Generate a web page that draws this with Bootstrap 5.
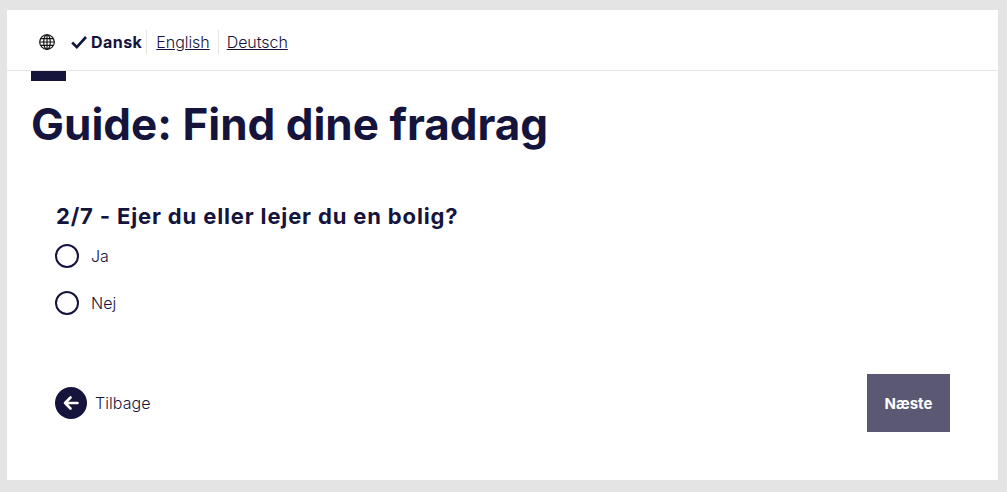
<!DOCTYPE html>
<html lang="da">
<head>
<meta charset="utf-8">
<title>Guide: Find dine fradrag</title>
<link href="https://cdn.jsdelivr.net/npm/bootstrap@5.3.0/dist/css/bootstrap.min.css" rel="stylesheet">
<style>
html,body{height:100%}
body{background:#e4e4e4;padding:10px 9px 12px 7px;font-family:Inter,"Liberation Sans",sans-serif;color:#14143c;overflow:hidden}
.sheet{background:#fff;height:470px;display:flex;flex-direction:column}
.langbar{height:61px;border-bottom:1px solid #e4e4e4;padding:20px 0 0 32px;align-items:flex-start}
.globe{width:16px;height:16px;margin:4px 16px 0 0;flex:none}
.lang{font-size:16px;line-height:24px;padding:0 8px 0 8px;height:24px;color:#14143c;font-weight:300;letter-spacing:-.05px}
.lang+.lang{border-left:1px solid #e4e4e4}
.lang.cur{font-weight:700;padding-left:0;padding-right:4px;display:flex;align-items:center;gap:4px;font-size:16px;letter-spacing:.45px}
.lang.cur+.lang{padding-left:9px}
.lang a{color:#14143c;text-decoration:underline}
.tick{width:16px;height:14px}
.accent{width:35px;height:10px;background:#14143c;margin-left:24px}
.ttl{font:700 44px/56px Inter,sans-serif;letter-spacing:0;color:#14143c;margin:15px 0 0 24px}
.guide{padding:49px 48px 0 48px}
.q{font:700 22px/30px Inter,sans-serif;margin:0 0 13px 1px;color:#14143c;letter-spacing:.85px}
.opt{display:flex;align-items:center;gap:12px;height:24px;margin-bottom:23px;font:300 16px/24px Inter,sans-serif}
.ring{width:24px;height:24px;border:2px solid #14143c;border-radius:50%;flex:none}
.foot{margin-top:59px;align-items:center}
.back{display:flex;align-items:center;gap:8px;font:300 16px/24px Inter,sans-serif;letter-spacing:.05px;color:#14143c;text-decoration:none}
.backdot{width:32px;height:32px;border-radius:50%;background:#14143c;display:flex;align-items:center;justify-content:center}
.next{width:83px;height:58px;background:#5b5873;color:#fff;border:0;border-radius:0;font:700 15px Inter,sans-serif;padding:0}
.next:disabled{background:#5b5873;color:#fff;opacity:1}
</style>
</head>
<body>
<div class="sheet">
  <nav class="langbar d-flex" aria-label="Sprog">
    <svg class="globe" viewBox="0 0 16 16" fill="none" stroke="#111" stroke-width="1.15"><circle cx="8" cy="8" r="7.3"/><ellipse cx="8" cy="8" rx="3.3" ry="7.3"/><path d="M.8 8h14.4M2 4.6h12M2 11.4h12M8 .8v14.4"/></svg>
    <div class="lang cur"><svg class="tick" viewBox="0 0 16 14" fill="none" stroke="#14143c" stroke-width="2.6"><path d="M1.2 7.5l4.6 4.6L15 2"/></svg>Dansk</div>
    <div class="lang"><a href="#">English</a></div>
    <div class="lang"><a href="#">Deutsch</a></div>
  </nav>
  <div class="accent"></div>
  <h1 class="ttl">Guide: Find dine fradrag</h1>
  <main class="guide">
    <h2 class="q">2/7 - Ejer du eller lejer du en bolig?</h2>
    <div class="opt"><span class="ring"></span><span>Ja</span></div>
    <div class="opt"><span class="ring"></span><span>Nej</span></div>
    <div class="foot d-flex justify-content-between">
      <a class="back" href="#"><span class="backdot"><svg width="16" height="16" viewBox="0 0 16 16" fill="none" stroke="#fff" stroke-width="2.6" stroke-linecap="round" stroke-linejoin="round"><path d="M14.5 8H2M7.5 2.5L2 8l5.5 5.5"/></svg></span>Tilbage</a>
      <button class="btn next" disabled>Næste</button>
    </div>
  </main>
</div>
<script src="https://cdn.jsdelivr.net/npm/bootstrap@5.3.0/dist/js/bootstrap.bundle.min.js"></script>
</body>
</html>
